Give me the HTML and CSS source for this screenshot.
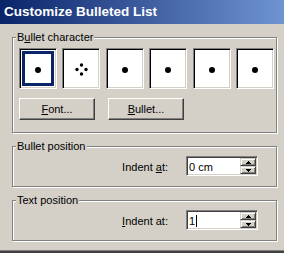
FILE: index.html
```html
<!DOCTYPE html>
<html>
<head>
<meta charset="utf-8">
<link rel="stylesheet" href="styles.css">
</head>
<body>
<div class="window">
  <div class="titlebar">Customize Bulleted List</div>
  <div class="content">
    <div class="group g-char">
      <span class="legend">B<u>u</u>llet character</span>
      <div class="bullets">
        <div class="bbox selected"><span class="dot"></span></div>
        <div class="bbox"><svg class="diamond" width="13" height="13" viewBox="0 0 13 13"><circle cx="6.5" cy="2" r="1.7"/><circle cx="2" cy="6.5" r="1.7"/><circle cx="11" cy="6.5" r="1.7"/><circle cx="6.5" cy="11" r="1.7"/></svg></div>
        <div class="bbox"><span class="dot"></span></div>
        <div class="bbox"><span class="dot"></span></div>
        <div class="bbox"><span class="dot"></span></div>
        <div class="bbox"><span class="dot"></span></div>
      </div>
      <div class="buttons">
        <div class="btn"><span><u>F</u>ont...</span></div>
        <div class="btn"><span><u>B</u>ullet...</span></div>
      </div>
    </div>
    <div class="group g-pos">
      <span class="legend">Bullet position</span>
      <span class="field-label">Indent <u>a</u>t:</span>
      <div class="spin">
        <span class="spin-text">0 cm</span>
        <div class="spin-btns">
          <span class="sb"><svg width="5" height="3" viewBox="0 0 5 3" shape-rendering="crispEdges"><path d="M2 0h1v1h1v1h1v1H0V2h1V1h1z"/></svg></span>
          <span class="sb"><svg width="5" height="3" viewBox="0 0 5 3" shape-rendering="crispEdges"><path d="M0 0h5v1H4v1H3v1H2V2H1V1H0z"/></svg></span>
        </div>
      </div>
    </div>
    <div class="group g-pos">
      <span class="legend">Text position</span>
      <span class="field-label"><u>I</u>ndent at:</span>
      <div class="spin">
        <span class="spin-text">1<span class="caret"></span></span>
        <div class="spin-btns">
          <span class="sb"><svg width="5" height="3" viewBox="0 0 5 3" shape-rendering="crispEdges"><path d="M2 0h1v1h1v1h1v1H0V2h1V1h1z"/></svg></span>
          <span class="sb"><svg width="5" height="3" viewBox="0 0 5 3" shape-rendering="crispEdges"><path d="M0 0h5v1H4v1H3v1H2V2H1V1H0z"/></svg></span>
        </div>
      </div>
    </div>
  </div>
  <div class="frame-bottom"></div>
</div>
</body>
</html>
```
FILE: styles.css
```css
* { box-sizing: border-box; }
html, body { margin: 0; padding: 0; }
body {
  width: 284px;
  height: 253px;
  overflow: hidden;
  background: #D4D0C8;
  font-family: "Liberation Sans", Arial, sans-serif;
  font-size: 11px;
  color: #000;
}
.window {
  height: 253px;
  display: flex;
  flex-direction: column;
}
.titlebar {
  height: 24px;
  line-height: 24px;
  padding-left: 4px;
  font-size: 13.5px;
  font-weight: bold;
  color: #fff;
  white-space: nowrap;
  background: linear-gradient(to right, #0A246A, #6F94D2);
}
.content {
  flex: 1;
  padding: 13px 7px 0 12px;
  display: flex;
  flex-direction: column;
  gap: 13px;
}
.frame-bottom {
  height: 3px;
  border-top: 1px solid #808080;
  background: #404040;
}
.group {
  position: relative;
  width: 265px;
  border: 1px solid #808080;
  box-shadow: inset 1px 1px 0 #fff, 1px 1px 0 #fff;
}
.legend {
  position: absolute;
  top: -7px;
  left: 3px;
  padding: 0 1px;
  line-height: 13px;
  background: #D4D0C8;
  white-space: nowrap;
}
.g-char {
  height: 96px;
  padding: 10px 2px 0 6px;
}
.bullets {
  display: flex;
  justify-content: space-between;
}
.bbox {
  width: 38px;
  height: 41px;
  background: #fff;
  border: 1px solid;
  border-color: #808080 #fff #fff #808080;
  box-shadow: inset 1px 1px 0 #000, inset -1px -1px 0 #D4D0C8;
  display: flex;
  align-items: center;
  justify-content: center;
}
.bbox.selected {
  outline: 3px solid #0A246A;
  outline-offset: -6px;
}
.dot {
  width: 6px;
  height: 6px;
  border-radius: 50%;
  background: #000;
  margin-top: 2px;
}
.diamond {
  display: block;
  fill: #000;
  margin-top: 1px;
}
.buttons {
  display: flex;
  gap: 13px;
  margin-top: 9px;
}
.btn {
  width: 76px;
  height: 22px;
  border: 1px solid;
  border-color: #fff #404040 #404040 #fff;
  box-shadow: inset -1px -1px 0 #808080;
  display: flex;
  align-items: center;
  justify-content: center;
}
.g-pos {
  height: 41px;
  display: flex;
  justify-content: flex-end;
  align-items: flex-start;
  padding: 9px 18px 0 0;
}
.field-label {
  line-height: 20px;
  padding-top: 1px;
  margin-right: 18px;
  white-space: nowrap;
}
.spin {
  width: 72px;
  height: 20px;
  background: #fff;
  border: 1px solid;
  border-color: #808080 #fff #fff #808080;
  box-shadow: inset 1px 1px 0 #404040, inset -1px -1px 0 #D4D0C8;
  padding: 1px;
  display: flex;
}
.spin-text {
  flex: 1;
  padding: 1px 0 0 1px;
  line-height: 16px;
  white-space: nowrap;
}
.caret {
  display: inline-block;
  width: 1px;
  height: 12px;
  background: #000;
  margin-left: 1px;
  vertical-align: -2px;
}
.spin-btns {
  width: 16px;
  display: flex;
  flex-direction: column;
}
.sb {
  height: 8px;
  background: #D4D0C8;
  border: 1px solid;
  border-color: #D4D0C8 #404040 #404040 #D4D0C8;
  box-shadow: inset 1px 1px 0 #fff, inset -1px -1px 0 #808080;
  display: flex;
  align-items: center;
  justify-content: center;
}
.sb svg { display: block; fill: #000; }
```
